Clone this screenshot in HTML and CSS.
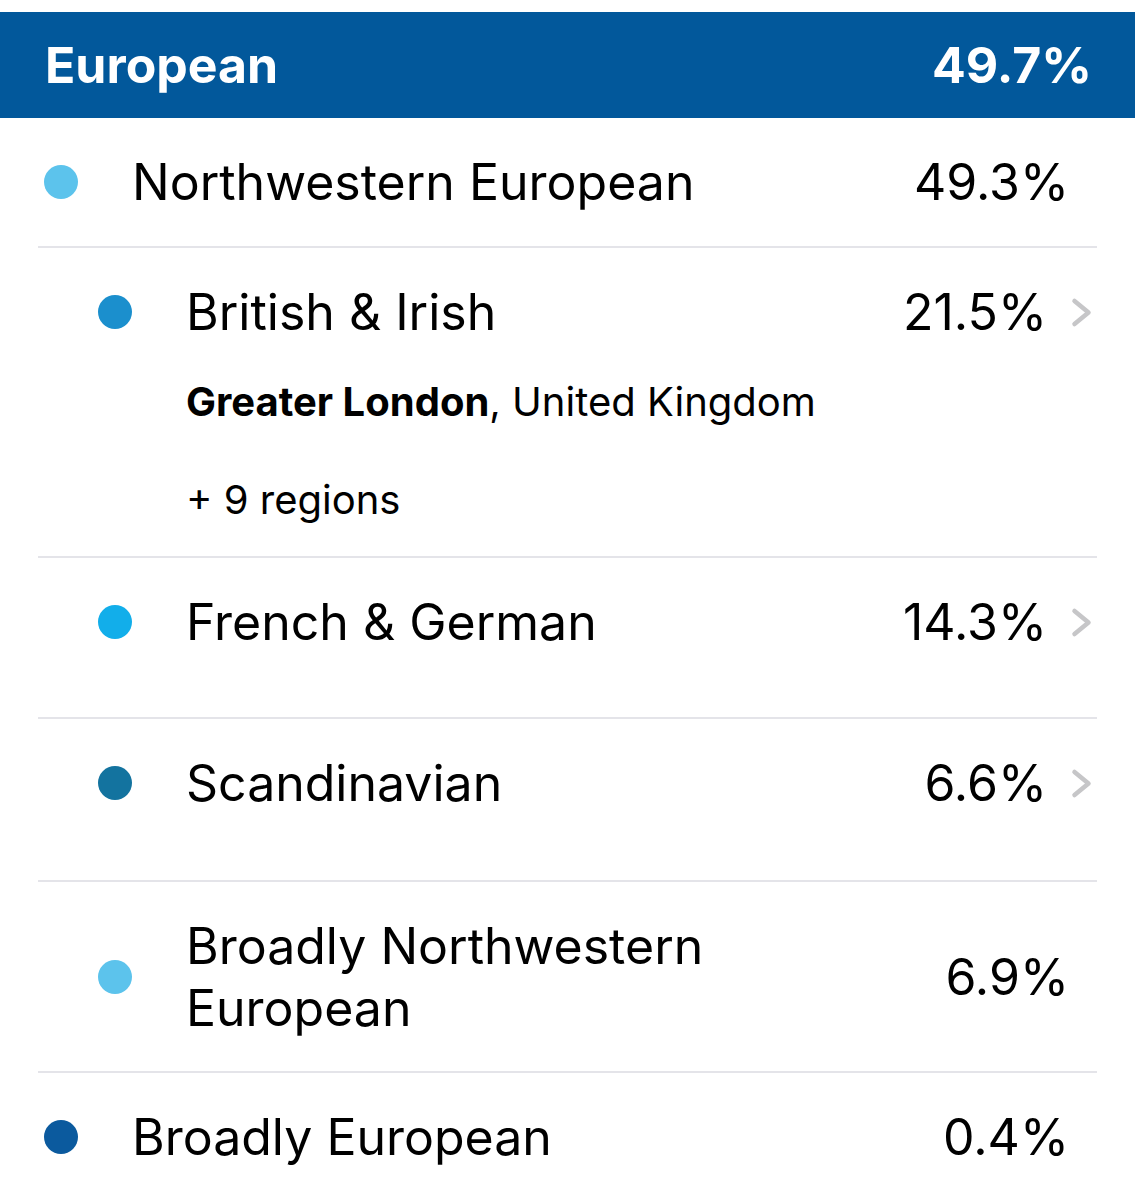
FILE: index.html
```html
<!DOCTYPE html>
<html lang="en">
<head>
    <meta charset="UTF-8">
    <meta name="viewport" content="width=device-width, initial-scale=1.0">
    <title>European ancestry</title>
    <link rel="stylesheet" href="styles.css">
</head>
<body>
    <div class="groupHeader">
        <span class="groupName">European</span>
        <span class="groupValue">49.7%</span>
    </div>

    <div class="list">
        <div class="row">
            <div class="line">
                <span class="dot" style="background:#5cc3ec"></span>
                <span class="name">Northwestern European</span>
                <span class="value">49.3%</span>
                <span class="chevSpace"></span>
            </div>
        </div>

        <div class="row sub british">
            <div class="line">
                <span class="dot" style="background:#1b8fcd"></span>
                <span class="name">British &amp; Irish</span>
                <span class="value">21.5%</span>
                <span class="chev">
                    <svg width="24" height="31" viewBox="0 0 24 31"><path d="M5.5 4 L19.5 15.5 L5.5 27" fill="none" stroke="#c6c6c8" stroke-width="4.5" stroke-linecap="round" stroke-linejoin="round"/></svg>
                </span>
            </div>
            <div class="detail"><b>Greater London</b>, United Kingdom</div>
            <div class="detail more">+ 9 regions</div>
        </div>

        <div class="row sub french">
            <div class="line">
                <span class="dot" style="background:#12aeea"></span>
                <span class="name">French &amp; German</span>
                <span class="value">14.3%</span>
                <span class="chev">
                    <svg width="24" height="31" viewBox="0 0 24 31"><path d="M5.5 4 L19.5 15.5 L5.5 27" fill="none" stroke="#c6c6c8" stroke-width="4.5" stroke-linecap="round" stroke-linejoin="round"/></svg>
                </span>
            </div>
        </div>

        <div class="row sub scand">
            <div class="line">
                <span class="dot" style="background:#13739f"></span>
                <span class="name">Scandinavian</span>
                <span class="value">6.6%</span>
                <span class="chev">
                    <svg width="24" height="31" viewBox="0 0 24 31"><path d="M5.5 4 L19.5 15.5 L5.5 27" fill="none" stroke="#c6c6c8" stroke-width="4.5" stroke-linecap="round" stroke-linejoin="round"/></svg>
                </span>
            </div>
        </div>

        <div class="row sub tall">
            <div class="line">
                <span class="dot" style="background:#5cc3ec"></span>
                <span class="name">Broadly Northwestern<br>European</span>
                <span class="value">6.9%</span>
                <span class="chevSpace"></span>
            </div>
        </div>

        <div class="row last">
            <div class="line">
                <span class="dot" style="background:#0b5a9e"></span>
                <span class="name">Broadly European</span>
                <span class="value">0.4%</span>
                <span class="chevSpace"></span>
            </div>
        </div>
    </div>
</body>
</html>
```

FILE: styles.css
```css
body {
    margin: 0;
    background: #fff;
    font-family: Inter, "Noto Sans", Arial, sans-serif;
    color: #000;
    overflow: hidden;
}
.groupHeader {
    margin-top: 12px;
    height: 106px;
    background-color: #02589b;
    color: #fff;
    display: flex;
    align-items: center;
    justify-content: space-between;
    padding: 0 43px 0 45px;
    font-size: 50px;
    font-weight: 700;
}
.list {
    padding: 0 38px;
}
.row {
    border-bottom: 2px solid #e4e4e9;
}
.row.last {
    border-bottom: none;
}
.line {
    display: flex;
    align-items: center;
    height: 128px;
    padding-left: 6px;
}
.sub .line {
    padding-left: 60px;
}
.dot {
    width: 34px;
    height: 34px;
    border-radius: 50%;
    flex-shrink: 0;
    margin-right: 54px;
}
.name {
    flex: 1;
    font-size: 50px;
    line-height: 62px;
}
.value {
    font-size: 50px;
}
.chevSpace {
    width: 28px;
}
.chev {
    width: 46px;
    display: flex;
    justify-content: flex-end;
    padding-right: 4px;
}
.british {
    padding-bottom: 30px;
}
.detail {
    margin-left: 148px;
    font-size: 40px;
    height: 52px;
    line-height: 52px;
}
.detail b {
    font-weight: 700;
}
.detail.more {
    margin-top: 46px;
}
.french {
    padding-bottom: 31px;
}
.scand {
    padding-bottom: 33px;
}
.tall .line {
    height: 189px;
}
```
